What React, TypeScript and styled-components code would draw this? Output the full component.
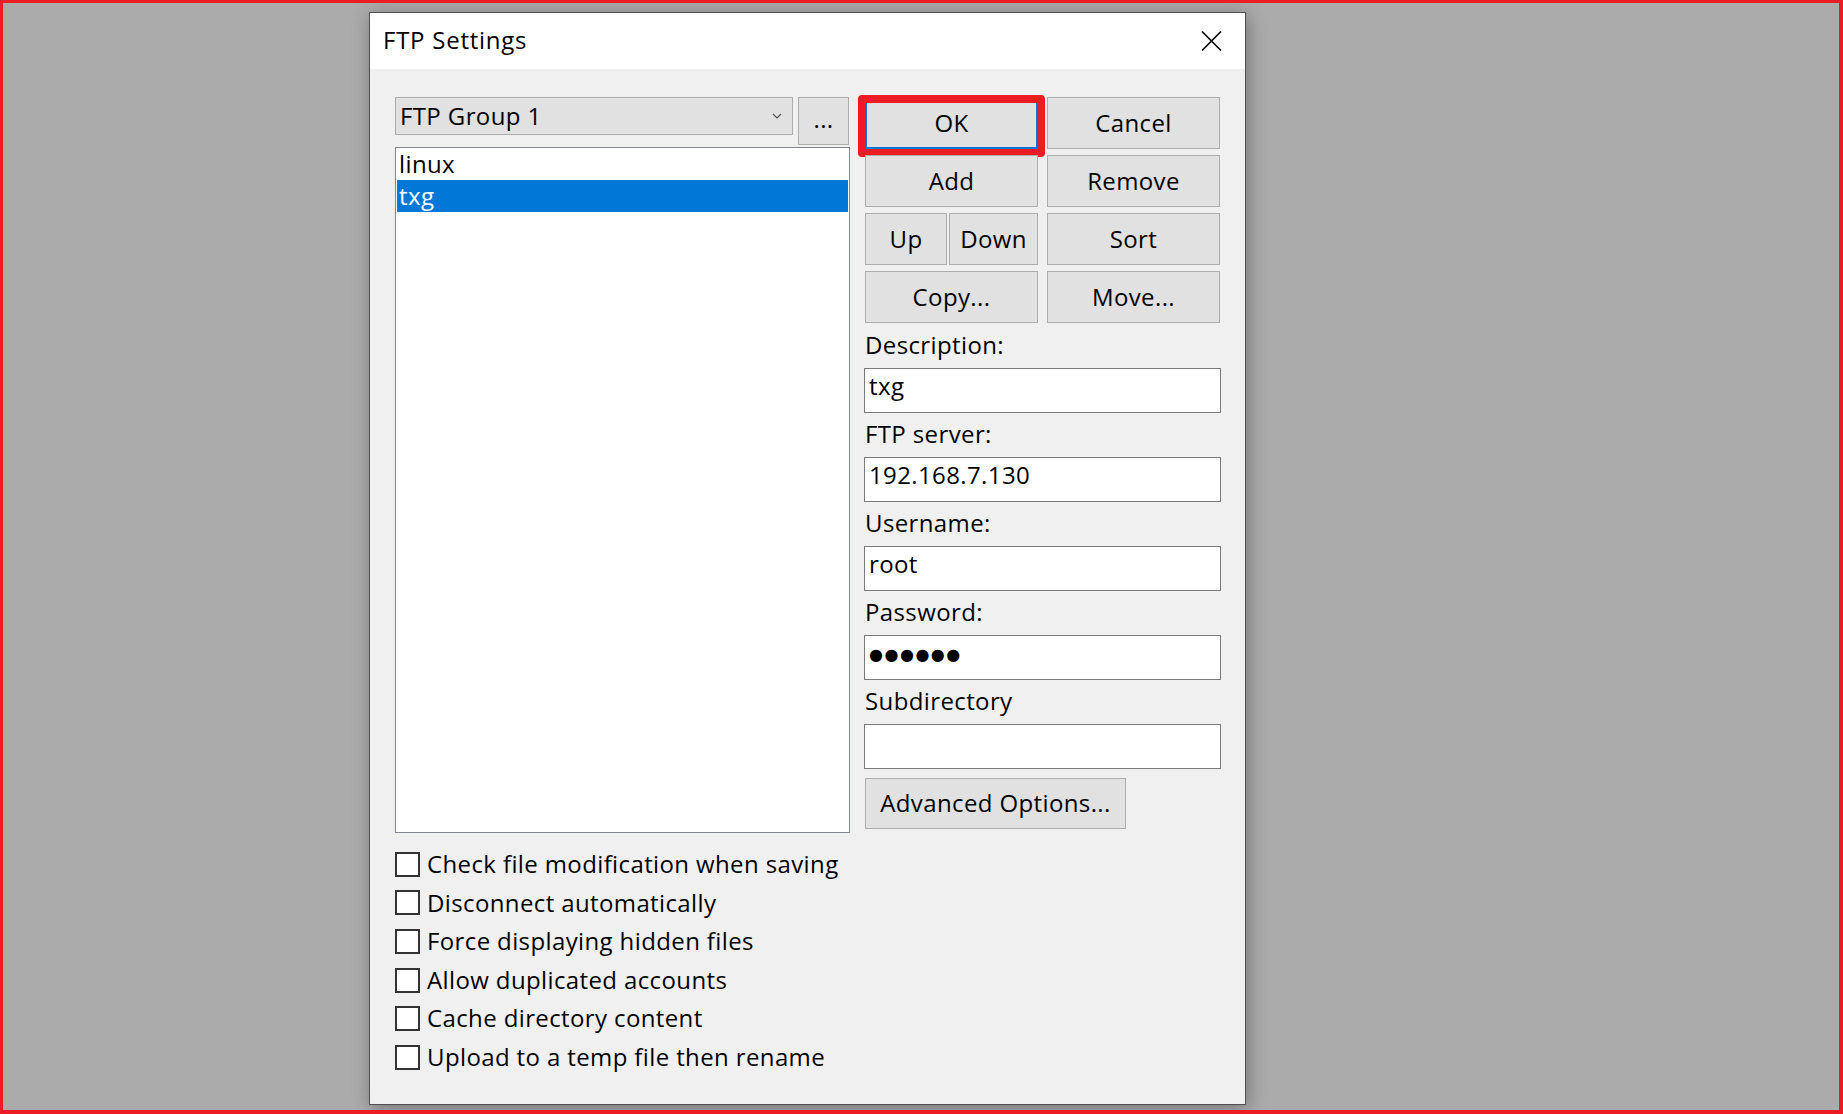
import React from "react";
import styled, { createGlobalStyle } from "styled-components";

const FONT = `"Open Sans", "Noto Sans", "Liberation Sans", sans-serif`;

const GlobalStyle = createGlobalStyle`
  html, body {
    margin: 0;
    padding: 0;
    background: #ababab;
  }
  * { box-sizing: border-box; }
`;

const Screen = styled.div`
  width: 1843px;
  height: 1114px;
  background: #ababab;
  border-style: solid;
  border-color: #ed1c24;
  border-width: 3px 4px 4px 3px;
  padding: 9px 0 0 366px;
  overflow: hidden;
  font-family: ${FONT};
  font-size: 24px;
  letter-spacing: 0.38px;
  color: #000;
`;

const Dialog = styled.div`
  width: 877px;
  height: 1093px;
  border: 1px solid #4f4f4f;
  box-shadow: 2px 3px 18px rgba(0, 0, 0, 0.32);
  display: flex;
  flex-direction: column;
  background: #f0f0f0;
`;

const TitleBar = styled.div`
  height: 56px;
  flex: none;
  background: #ffffff;
  display: flex;
  align-items: center;
  padding-left: 13px;
`;

const TitleText = styled.div`
  flex: 1;
  font-size: 24px;
  letter-spacing: 0.75px;
  line-height: 32px;
  padding-bottom: 2px;
`;

const CloseButton = styled.div`
  width: 66px;
  height: 56px;
  display: flex;
  align-items: center;
  justify-content: center;
  padding-right: 2px;
`;

const Body = styled.div`
  flex: 1;
  padding: 28px 24px 0 25px;
  display: flex;
  flex-direction: column;
`;

const MainGrid = styled.div`
  display: grid;
  grid-template-columns: 455px 356px;
  column-gap: 15px;
  align-items: start;
`;

const LeftColumn = styled.div`
  display: flex;
  flex-direction: column;
`;

const ComboRow = styled.div`
  display: flex;
  align-items: flex-start;
  gap: 5px;
`;

const ComboBox = styled.div`
  width: 398px;
  height: 38px;
  background: #e1e1e1;
  border: 1px solid #adadad;
  display: flex;
  align-items: center;
  padding: 0 10px 0 4px;
`;

const ComboLabel = styled.span`
  flex: 1;
  line-height: 32px;
`;

const BrowseButton = styled.div`
  width: 51px;
  height: 48px;
  background: #e1e1e1;
  border: 1px solid #adadad;
  display: flex;
  align-items: center;
  justify-content: center;
  line-height: 32px;
  padding-bottom: 4px;
`;

const ListBox = styled.div`
  margin-top: 2px;
  height: 686px;
  background: #ffffff;
  border: 1px solid #828790;
  padding: 0 1px;
`;

const ListItem = styled.div<{ $selected?: boolean }>`
  height: 32px;
  line-height: 32px;
  padding-left: 2px;
  background: ${(p) => (p.$selected ? "#0078d7" : "transparent")};
  color: ${(p) => (p.$selected ? "#ffffff" : "#000000")};
`;

const RightColumn = styled.div`
  display: flex;
  flex-direction: column;
`;

const ButtonGrid = styled.div`
  display: grid;
  grid-template-columns: 173px 173px;
  grid-auto-rows: 52px;
  column-gap: 9px;
  row-gap: 6px;
`;

const PushButton = styled.div<{ $default?: boolean; $width?: number }>`
  position: relative;
  height: 100%;
  width: ${(p) => (p.$width ? `${p.$width}px` : "auto")};
  flex: ${(p) => (p.$width ? "none" : "1")};
  background: #e1e1e1;
  border: ${(p) => (p.$default ? "2px solid #0078d7" : "1px solid #adadad")};
  display: flex;
  align-items: center;
  justify-content: center;
  line-height: 32px;
  padding-bottom: 1px;
`;

const SplitCell = styled.div`
  display: flex;
  gap: 2px;
`;

const Highlight = styled.div`
  position: absolute;
  left: -9px;
  top: -4px;
  right: -9px;
  bottom: -10px;
  border: 8px solid #ed1c24;
  border-radius: 4px;
  pointer-events: none;
`;

const FieldLabel = styled.div<{ $first?: boolean }>`
  height: ${(p) => (p.$first ? 45 : 44)}px;
  padding-top: ${(p) => (p.$first ? 6 : 5)}px;
  line-height: 31px;
`;

const TextField = styled.input`
  display: block;
  width: 357px;
  height: 45px;
  margin-left: -1px;
  border: 1px solid #7a7a7a;
  background: #ffffff;
  padding: 0 4px 10px;
  font-family: ${FONT};
  font-size: 24px;
  letter-spacing: 0.38px;
  color: #000;
  outline: none;
`;

const PasswordField = styled(TextField)`
  font-family: "DejaVu Sans", sans-serif;
  font-size: 16px;
  letter-spacing: 1.5px;
  padding: 0 4px 6px 4px;
`;

const AdvancedButton = styled.div`
  margin-top: 9px;
  width: 261px;
  height: 51px;
  background: #e1e1e1;
  border: 1px solid #adadad;
  display: flex;
  align-items: center;
  justify-content: center;
  line-height: 32px;
  padding-bottom: 2px;
`;

const CheckList = styled.div`
  margin-top: 12px;
  display: flex;
  flex-direction: column;
`;

const CheckRow = styled.div`
  height: 38.6px;
  display: flex;
  align-items: center;
  gap: 7px;
  line-height: 38.6px;
`;

const CheckBox = styled.span`
  width: 25px;
  height: 25px;
  flex: none;
  border: 2px solid #333333;
  background: #ffffff;
`;

const CheckText = styled.span`
  white-space: nowrap;
`;

const CloseIcon = () => (
  <svg width="21" height="20" viewBox="0 0 21 20">
    <path d="M1 0.5 L20 19.5 M20 0.5 L1 19.5" stroke="#111" strokeWidth="1.7" fill="none" />
  </svg>
);

const ChevronIcon = () => (
  <svg width="10" height="6" viewBox="0 0 10 6">
    <path d="M1 1 L5 5 L9 1" stroke="#555" strokeWidth="1.2" fill="none" />
  </svg>
);

const fields = [
  { label: "Description:", value: "txg" },
  { label: "FTP server:", value: "192.168.7.130" },
  { label: "Username:", value: "root" },
];

const options = [
  "Check file modification when saving",
  "Disconnect automatically",
  "Force displaying hidden files",
  "Allow duplicated accounts",
  "Cache directory content",
  "Upload to a temp file then rename",
];

export default function App() {
  return (
    <>
      <GlobalStyle />
      <Screen>
        <Dialog>
          <TitleBar>
            <TitleText>FTP Settings</TitleText>
            <CloseButton>
              <CloseIcon />
            </CloseButton>
          </TitleBar>
          <Body>
            <MainGrid>
              <LeftColumn>
                <ComboRow>
                  <ComboBox>
                    <ComboLabel>FTP Group 1</ComboLabel>
                    <ChevronIcon />
                  </ComboBox>
                  <BrowseButton>...</BrowseButton>
                </ComboRow>
                <ListBox>
                  <ListItem>linux</ListItem>
                  <ListItem $selected>txg</ListItem>
                </ListBox>
              </LeftColumn>
              <RightColumn>
                <ButtonGrid>
                  <PushButton $default>
                    OK
                    <Highlight />
                  </PushButton>
                  <PushButton>Cancel</PushButton>
                  <PushButton>Add</PushButton>
                  <PushButton>Remove</PushButton>
                  <SplitCell>
                    <PushButton $width={82}>Up</PushButton>
                    <PushButton>Down</PushButton>
                  </SplitCell>
                  <PushButton>Sort</PushButton>
                  <PushButton>Copy...</PushButton>
                  <PushButton>Move...</PushButton>
                </ButtonGrid>
                {fields.map((f, i) => (
                  <React.Fragment key={f.label}>
                    <FieldLabel $first={i === 0}>{f.label}</FieldLabel>
                    <TextField readOnly value={f.value} />
                  </React.Fragment>
                ))}
                <FieldLabel>Password:</FieldLabel>
                <PasswordField readOnly value={"●●●●●●"} />
                <FieldLabel>Subdirectory</FieldLabel>
                <TextField readOnly value="" />
                <AdvancedButton>Advanced Options...</AdvancedButton>
              </RightColumn>
            </MainGrid>
            <CheckList>
              {options.map((o) => (
                <CheckRow key={o}>
                  <CheckBox />
                  <CheckText>{o}</CheckText>
                </CheckRow>
              ))}
            </CheckList>
          </Body>
        </Dialog>
      </Screen>
    </>
  );
}
